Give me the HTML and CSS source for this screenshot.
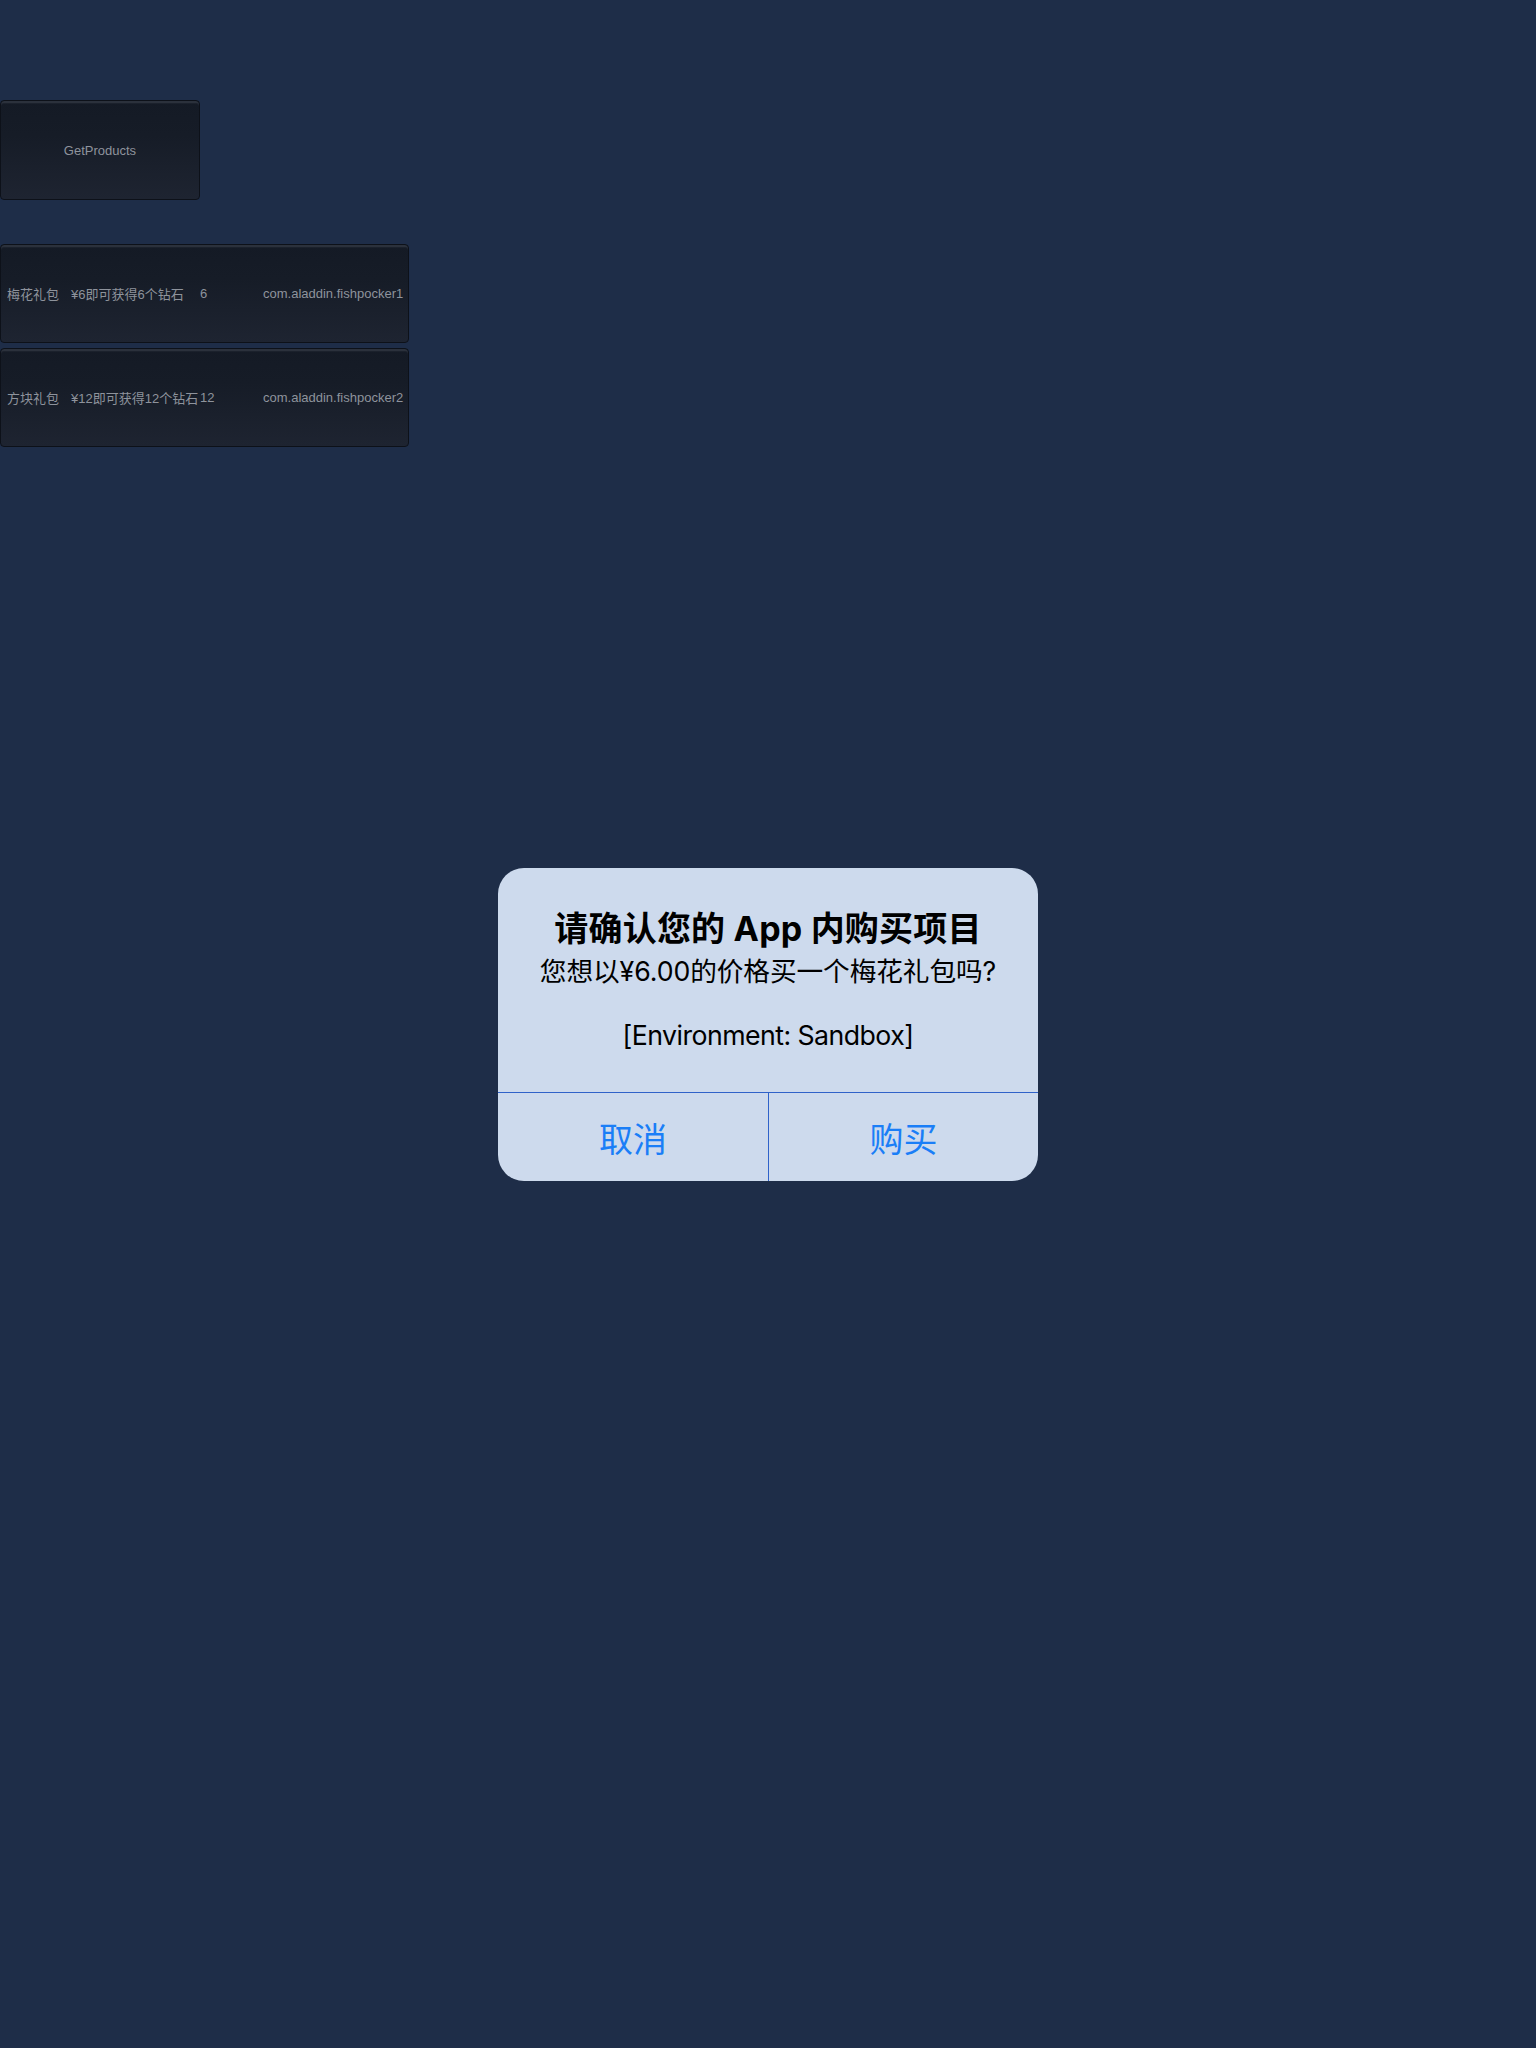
FILE: index.html
```html
<!DOCTYPE html>
<html lang="zh-CN">
<head>
<meta charset="utf-8">
<title>IAP Test</title>
<link rel="stylesheet" href="styles.css">
</head>
<body>
<main class="screen">
  <button class="gui-btn get-btn">GetProducts</button>
  <div class="product-list">
    <button class="gui-btn product-row">
      <span class="col col-name">梅花礼包</span>
      <span class="col col-desc">¥6即可获得6个钻石</span>
      <span class="col col-price">6</span>
      <span class="col col-id">com.aladdin.fishpocker1</span>
    </button>
    <button class="gui-btn product-row">
      <span class="col col-name">方块礼包</span>
      <span class="col col-desc">¥12即可获得12个钻石</span>
      <span class="col col-price">12</span>
      <span class="col col-id">com.aladdin.fishpocker2</span>
    </button>
  </div>
</main>

<div class="alert" role="dialog">
  <div class="alert-body">
    <div class="alert-title">请确认您的 App 内购买项目</div>
    <div class="alert-msg">您想以¥6.00的价格买一个梅花礼包吗?</div>
    <div class="alert-env">[Environment: Sandbox]</div>
  </div>
  <div class="alert-actions">
    <div class="alert-action">取消</div>
    <div class="alert-action">购买</div>
  </div>
</div>
</body>
</html>
```

FILE: styles.css
```css
html, body {
  margin: 0;
  padding: 0;
}

body {
  background: #1e2d48;
  min-height: 2048px;
  font-family: "Liberation Sans", "Noto Sans CJK SC", sans-serif;
}

.screen {
  padding-top: 100px;
  display: flex;
  flex-direction: column;
  align-items: flex-start;
}

.gui-btn {
  box-sizing: border-box;
  margin: 0;
  border: 1px solid #0d1119;
  border-radius: 4px;
  background: linear-gradient(to bottom, #141a25 0%, #161c27 35%, #1e2431 100%);
  box-shadow: inset 0 2px 0 #2b313c, inset 0 3px 0 #1b212c;
  color: #8e939c;
  font-family: "Liberation Sans", "Noto Sans CJK SC", sans-serif;
  font-size: 13px;
  padding: 0;
  cursor: default;
}

.get-btn {
  width: 200px;
  height: 100px;
  text-align: center;
}

.product-list {
  margin-top: 44px;
  display: flex;
  flex-direction: column;
  gap: 5px;
}

.product-row {
  width: 409px;
  height: 99px;
  display: flex;
  align-items: center;
  padding-left: 6px;
  text-align: left;
  white-space: nowrap;
}

.col {
  flex: none;
}

.col-name { width: 64px; }
.col-desc { width: 129px; }
.col-price { width: 63px; }
.col-id { width: 140px; }

.alert {
  position: absolute;
  left: 498px;
  top: 868px;
  width: 540px;
  height: 313px;
  box-sizing: border-box;
  background: #cddaed;
  border-radius: 26px;
  overflow: hidden;
  display: flex;
  flex-direction: column;
  font-family: "Inter", "Noto Sans CJK SC", sans-serif;
  color: #000;
}

.alert-body {
  padding: 39px 16px 41px;
  text-align: center;
  border-bottom: 1px solid #2f62c9;
}

.alert-title {
  font-size: 34px;
  font-weight: 700;
  line-height: 44px;
  letter-spacing: 0.2px;
}

.alert-msg {
  margin-top: 4px;
  font-size: 26.7px;
  line-height: 32px;
  letter-spacing: -0.1px;
}

.alert-env {
  margin-top: 32px;
  font-size: 26.7px;
  line-height: 32px;
  letter-spacing: -0.55px;
}

.alert-actions {
  flex: 1;
  display: grid;
  grid-template-columns: 1fr 1fr;
}

.alert-action {
  display: flex;
  align-items: center;
  justify-content: center;
  font-size: 34px;
  color: #1a7ef7;
  font-family: "Noto Sans CJK SC", sans-serif;
}

.alert-action + .alert-action {
  border-left: 1px solid #2f62c9;
}
```
